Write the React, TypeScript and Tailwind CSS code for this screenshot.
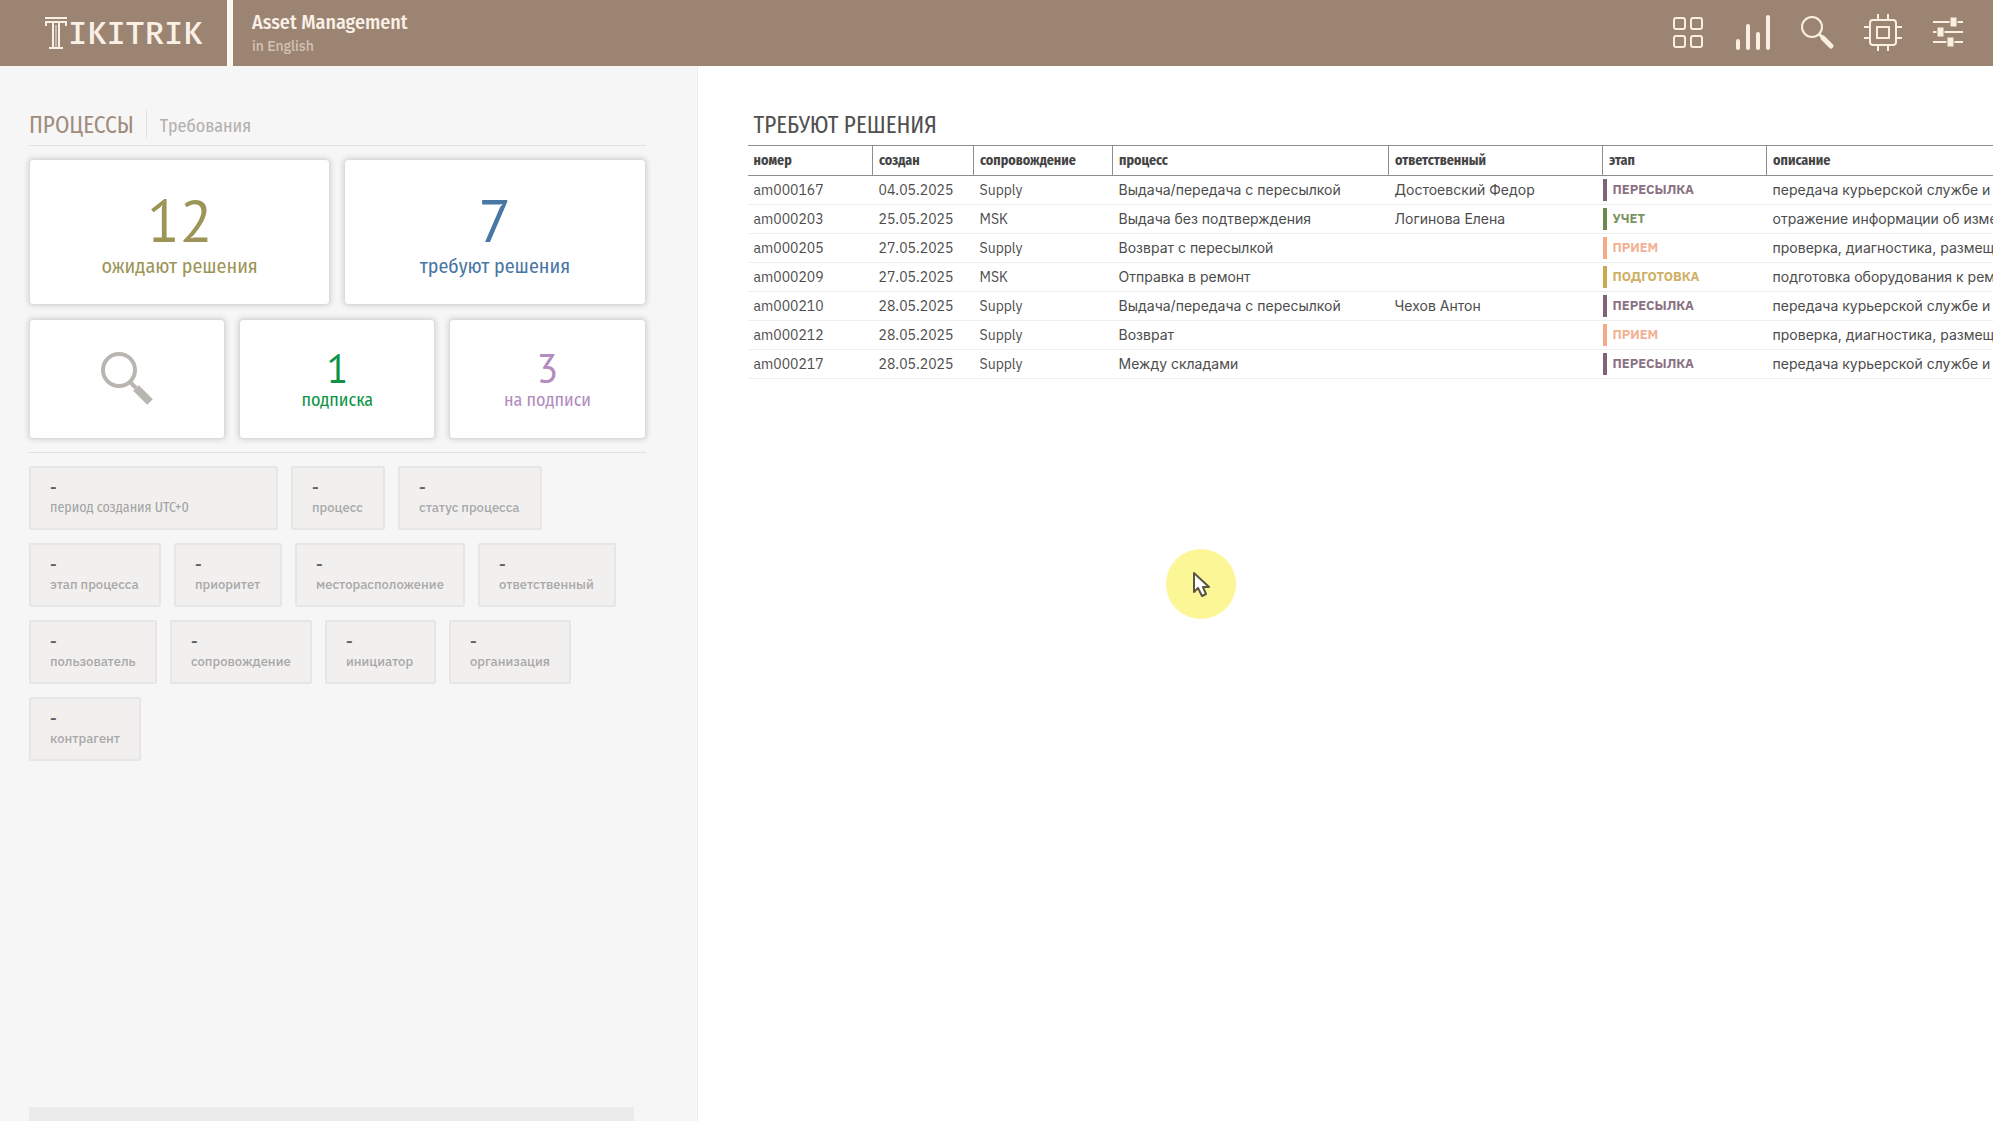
import { ReactNode } from "react";

interface Filter {
  label: string;
  width: string;
  narrow?: boolean;
}

interface Process {
  id: string;
  date: string;
  support: string;
  process: string;
  owner: string;
  stage: string;
  text: string;
}

const filters: Filter[][] = [
  [
    { label: "период создания UTC+0", width: "w-[249px]", narrow: true },
    { label: "процесс", width: "w-[94px]" },
    { label: "статус процесса", width: "w-[144px]" },
  ],
  [
    { label: "этап процесса", width: "w-[132px]" },
    { label: "приоритет", width: "w-[108px]" },
    { label: "месторасположение", width: "w-[170px]" },
    { label: "ответственный", width: "w-[138px]" },
  ],
  [
    { label: "пользователь", width: "w-[128px]" },
    { label: "сопровождение", width: "w-[142px]" },
    { label: "инициатор", width: "w-[111px]" },
    { label: "организация", width: "w-[122px]" },
  ],
  [{ label: "контрагент", width: "w-[112px]" }],
];

const stageStyles: Record<string, string> = {
  "ПЕРЕСЫЛКА": "border-[#7f6478] text-[#8a7183]",
  "УЧЕТ": "border-[#6a8a4a] text-[#7a9460]",
  "ПРИЕМ": "border-[#f2ab86] text-[#f3b194]",
  "ПОДГОТОВКА": "border-[#c8a94e] text-[#cfb066]",
};

const columns = [
  { label: "номер", width: "w-[125px]" },
  { label: "создан", width: "w-[101px]" },
  { label: "сопровождение", width: "w-[139px]" },
  { label: "процесс", width: "w-[276px]" },
  { label: "ответственный", width: "w-[214px]" },
  { label: "этап", width: "w-[164px]" },
  { label: "описание", width: "" },
];

const courier = "передача курьерской службе и доставка получателю";
const check = "проверка, диагностика, размещение на складе";

const rows: Process[] = [
  { id: "am000167", date: "04.05.2025", support: "Supply", process: "Выдача/передача с пересылкой", owner: "Достоевский Федор", stage: "ПЕРЕСЫЛКА", text: courier },
  { id: "am000203", date: "25.05.2025", support: "MSK", process: "Выдача без подтверждения", owner: "Логинова Елена", stage: "УЧЕТ", text: "отражение информации об изменениях в учете" },
  { id: "am000205", date: "27.05.2025", support: "Supply", process: "Возврат с пересылкой", owner: "", stage: "ПРИЕМ", text: check },
  { id: "am000209", date: "27.05.2025", support: "MSK", process: "Отправка в ремонт", owner: "", stage: "ПОДГОТОВКА", text: "подготовка оборудования к ремонту" },
  { id: "am000210", date: "28.05.2025", support: "Supply", process: "Выдача/передача с пересылкой", owner: "Чехов Антон", stage: "ПЕРЕСЫЛКА", text: courier },
  { id: "am000212", date: "28.05.2025", support: "Supply", process: "Возврат", owner: "", stage: "ПРИЕМ", text: check },
  { id: "am000217", date: "28.05.2025", support: "Supply", process: "Между складами", owner: "", stage: "ПЕРЕСЫЛКА", text: courier },
];

function NavButton({ label, children }: { label: string; children: ReactNode }) {
  return (
    <button type="button" aria-label={label} className="h-10 w-10">
      <svg viewBox="0 0 40 40" className="h-10 w-10" fill="none" stroke="#faeee0" strokeWidth="2">
        {children}
      </svg>
    </button>
  );
}

function Header() {
  return (
    <header className="flex h-[66px] items-stretch bg-[#9c8473] text-[#faf0e6]">
      <a href="#" aria-label="Tikitrik" className="flex w-[227px] shrink-0 items-center pl-[44px]">
        {/* column emblem in front of the word */}
        <svg viewBox="0 0 24 36" className="h-9 w-6 shrink-0" fill="none" stroke="#faf0e6" strokeWidth="2">
          <line x1="1" y1="3" x2="23" y2="3" />
          <line x1="2" y1="7" x2="22" y2="7" />
          <line x1="2" y1="6" x2="2" y2="11" />
          <line x1="22" y1="6" x2="22" y2="11" />
          <line x1="9" y1="7" x2="9" y2="32" />
          <line x1="12" y1="10" x2="12" y2="32" strokeWidth="1" />
          <line x1="15" y1="7" x2="15" y2="32" />
          <line x1="5" y1="33" x2="19" y2="33" />
        </svg>
        <span className="font-['Fira_Mono','DejaVu_Sans_Mono',monospace] text-[32px] leading-[36px] font-medium">
          IKITRIK
        </span>
      </a>

      <div className="w-[6px] shrink-0 bg-[#fbf8f4]" />

      <div className="flex flex-col pt-[9px] pl-[19px]">
        <span className="text-[20px] leading-[26px] font-medium">Asset Management</span>
        <a
          href="#"
          className="font-['IBM_Plex_Sans','Noto_Sans',sans-serif] text-[14px] leading-[22px] font-medium text-[#d3c3b5]"
        >
          in English
        </a>
      </div>

      <nav className="ml-auto flex items-center gap-[25px] pr-[25px]">
        <NavButton label="Панель">
          <rect x="6" y="5" width="11" height="11" rx="2" />
          <rect x="23" y="5" width="11" height="11" rx="2" />
          <rect x="6" y="23" width="11" height="11" rx="2" />
          <rect x="23" y="23" width="11" height="11" rx="2" />
        </NavButton>

        <NavButton label="Отчеты">
          <g strokeWidth="4" strokeLinecap="round">
            <line x1="5" y1="28" x2="5" y2="35" />
            <line x1="15" y1="13" x2="15" y2="35" />
            <line x1="25" y1="21" x2="25" y2="35" />
            <line x1="35" y1="4" x2="35" y2="35" />
          </g>
        </NavButton>

        <NavButton label="Поиск">
          <circle cx="14" cy="14" r="10" />
          <line x1="21" y1="21" x2="25" y2="25" strokeWidth="3" />
          <line x1="25" y1="25" x2="33" y2="33" strokeWidth="5" strokeLinecap="round" />
        </NavButton>

        <NavButton label="Оборудование">
          <rect x="7" y="7" width="26" height="25" rx="3" />
          <rect x="14" y="14" width="12" height="11" />
          <path d="M15 7V1M25 7V1M15 32v6M25 32v6M7 14H1M7 25H1M33 14h6M33 25h6" />
        </NavButton>

        <NavButton label="Настройки">
          <path d="M5 9h30M5 19h30M5 29h30" />
          <g fill="#faeee0" stroke="#9c8473" strokeWidth="1">
            <rect x="22" y="4" width="7" height="10" />
            <rect x="9" y="14" width="7" height="10" />
            <rect x="19" y="24" width="7" height="10" />
          </g>
        </NavButton>
      </nav>
    </header>
  );
}

function Card({ big, color, value, label }: { big?: boolean; color: string; value: string; label: string }) {
  return (
    <button
      type="button"
      className={`flex flex-1 flex-col items-center rounded-[4px] border border-[#dcdcdc] bg-white pt-[26px] shadow-[0_0_5px_1px_#d4d4d4] ${
        big ? "h-[146px]" : "h-[120px]"
      } ${color}`}
    >
      <span
        className={`font-['PT_Sans','Noto_Sans',sans-serif] ${
          big ? "text-[60px] leading-[68px]" : "text-[40px] leading-[44px]"
        }`}
      >
        {value}
      </span>
      <span className={big ? "text-[20px] leading-[24px]" : "text-[18px] leading-[20px]"}>
        {label}
      </span>
    </button>
  );
}

function Sidebar() {
  return (
    <aside className="flex w-[35%] shrink-0 flex-col border-r border-[#ececec] bg-[#f6f6f6] pr-[51px] pl-[29px]">
      <div className="mt-[42px] flex h-[38px] items-start border-b border-[#e2e2e2]">
        <a href="#" className="pr-[12px] text-[23px] leading-[34px] text-[#a08c7e]">
          ПРОЦЕССЫ
        </a>
        <a
          href="#"
          className="mt-[2px] h-[28px] border-l border-[#e2e2e2] pl-[13px] text-[18px] leading-[32px] text-[#b3b0ae]"
        >
          Требования
        </a>
      </div>

      <div className="mt-[13px] flex gap-[14px]">
        <Card big color="text-[#9c9557]" value="12" label="ожидают решения" />
        <Card big color="text-[#4876a5]" value="7" label="требуют решения" />
      </div>

      <div className="mt-[14px] flex gap-[14px] border-b border-[#e2e2e2] pb-[13px]">
        <button
          type="button"
          aria-label="Поиск"
          className="flex h-[120px] flex-1 items-center justify-center rounded-[4px] border border-[#dcdcdc] bg-white shadow-[0_0_5px_1px_#d4d4d4]"
        >
          <svg viewBox="0 0 54 54" className="h-[54px] w-[54px]" fill="none" stroke="#b9b5b0">
            <circle cx="19" cy="18" r="16" strokeWidth="4" />
            <line x1="30" y1="30" x2="36" y2="36" strokeWidth="4" />
            <line x1="36" y1="36" x2="50" y2="50" strokeWidth="8" />
          </svg>
        </button>
        <Card color="text-[#0c9444]" value="1" label="подписка" />
        <Card color="text-[#b18cbd]" value="3" label="на подписи" />
      </div>

      <div className="mt-[13px] flex flex-col gap-[13px]">
        {filters.map((line, i) => (
          <div key={i} className="flex gap-[13px]">
            {line.map((f) => (
              <button
                key={f.label}
                type="button"
                className={`flex h-[64px] shrink-0 flex-col items-start rounded-[2px] border-2 border-[#e6e6e6] bg-[#f1f0ef] pt-[9px] pl-[19px] text-left whitespace-nowrap ${f.width}`}
              >
                <span className="text-[18px] leading-[22px] font-medium text-[#5f5f5f]">-</span>
                <span
                  className={
                    f.narrow
                      ? "text-[14px] leading-[18px] text-[#a3a3a3]"
                      : "font-['IBM_Plex_Sans','Noto_Sans',sans-serif] text-[13px] leading-[18px] font-medium text-[#a8a8a8]"
                  }
                >
                  {f.label}
                </span>
              </button>
            ))}
          </div>
        ))}
      </div>

      <div className="mt-auto mr-[12px] h-[14px] bg-[#ebebeb]" />
    </aside>
  );
}

function ProcessTable() {
  return (
    <table className="w-full table-fixed border-collapse text-left whitespace-nowrap text-[#4c4c4c]">
      <thead>
        <tr className="h-[30px] border-y border-[#8e8e8e]">
          {columns.map((c, i) => (
            <th
              key={c.label}
              className={`pl-[6px] text-[14px] leading-[20px] font-bold text-[#444444] ${
                i > 0 ? "border-l border-[#8e8e8e]" : ""
              } ${c.width}`}
            >
              {c.label}
            </th>
          ))}
        </tr>
      </thead>

      <tbody className="font-['Inter',sans-serif] text-[14px] leading-[20px]">
        {rows.map((r) => (
          <tr key={r.id} className="h-[29px] border-b border-[#eeeeee]">
            <td className="pl-[6px] font-['IBM_Plex_Sans','Noto_Sans',sans-serif]">{r.id}</td>
            <td className="pl-[6px] font-['IBM_Plex_Sans','Noto_Sans',sans-serif]">{r.date}</td>
            <td className="pl-[6px] font-['IBM_Plex_Sans','Noto_Sans',sans-serif]">{r.support}</td>
            <td className="pl-[6px]">{r.process}</td>
            <td className="pl-[6px]">{r.owner}</td>
            <td>
              <span
                className={`block border-l-4 pl-[6px] font-['IBM_Plex_Sans','Noto_Sans',sans-serif] text-[13px] leading-[22px] font-bold ${stageStyles[r.stage]}`}
              >
                {r.stage}
              </span>
            </td>
            <td className="overflow-hidden pl-[6px]">{r.text}</td>
          </tr>
        ))}
      </tbody>
    </table>
  );
}

export default function App() {
  return (
    <div className="flex min-h-screen flex-col bg-white font-['Fira_Sans_Condensed','Roboto_Condensed','Noto_Sans',sans-serif]">
      <Header />

      <div className="relative flex grow">
        <Sidebar />

        <main className="min-w-0 grow overflow-hidden pt-[42px] pl-[50px]">
          <h1 className="h-[37px] pl-[6px] text-[23px] leading-[34px] text-[#505050]">
            ТРЕБУЮТ РЕШЕНИЯ
          </h1>
          <ProcessTable />
        </main>

        {/* Pointer highlight */}
        <div className="pointer-events-none absolute top-[483px] left-[1166px] h-[70px] w-[70px] rounded-full bg-[#fcf796]">
          <svg viewBox="0 0 70 70" className="h-[70px] w-[70px]">
            <path
              d="M28 24v19l4-4 4 8 4-2-3-7h6z"
              fill="#ffffff"
              stroke="#5a5640"
              strokeWidth="2"
              strokeLinejoin="round"
            />
          </svg>
        </div>
      </div>
    </div>
  );
}
